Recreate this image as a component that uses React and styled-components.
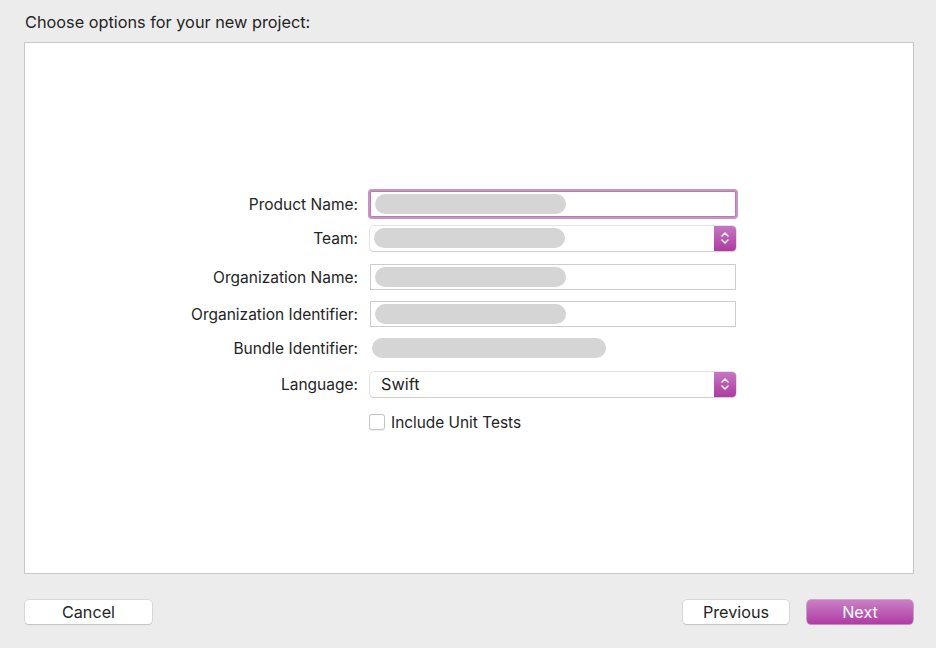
import React from "react";
import styled, { createGlobalStyle } from "styled-components";

const GlobalStyle = createGlobalStyle`
  html, body {
    margin: 0;
    padding: 0;
    background: #ececec;
    font-family: "Inter", "Liberation Sans", sans-serif;
    color: #242424;
  }
`;

const Window = styled.div`
  width: 936px;
  height: 648px;
  box-sizing: border-box;
  padding: 12px 22px 0 24px;
  display: flex;
  flex-direction: column;
`;

const Title = styled.div`
  font-size: 16.3px;
  height: 20px;
  line-height: 20px;
  padding-left: 1px;
  margin-bottom: 10px;
`;

const Panel = styled.div`
  height: 532px;
  box-sizing: border-box;
  background: #fff;
  border: 1px solid #c8c8c8;
  padding-top: 146px;
`;

const Form = styled.div`
  display: flex;
  flex-direction: column;
`;

const Row = styled.div`
  display: grid;
  grid-template-columns: 333px 366px;
  column-gap: 12px;
  align-items: center;
  height: ${(p) => p.h}px;
`;

const Label = styled.div`
  text-align: right;
  font-size: 15.5px;
`;

const TextField = styled.div`
  height: 26px;
  box-sizing: border-box;
  border: 1px solid ${(p) => (p.focused ? "#b87ab6" : "#cdcdcd")};
  box-shadow: ${(p) => (p.focused ? "0 0 0 2px #c894c6" : "none")};
  border-radius: ${(p) => (p.focused ? "2px" : "0")};
  background: #fff;
  display: flex;
  align-items: center;
  padding-left: 4px;
`;

const Popup = styled.div`
  height: 25px;
  box-sizing: border-box;
  border-radius: 4px;
  background: #fff;
  box-shadow: 0 0 0 0.5px #c9c9c9, 0 1px 1px rgba(0, 0, 0, 0.18);
  display: flex;
  align-items: center;
  position: relative;
  padding-left: 4px;
`;

const PopupText = styled.span`
  font-size: 16.3px;
  padding-left: 7px;
`;

const Stepper = styled.div`
  position: absolute;
  right: 0;
  top: 0;
  bottom: 0;
  width: 22px;
  border-radius: 0 4px 4px 0;
  background: linear-gradient(#c677c1, #ad3ba3);
  display: flex;
  align-items: center;
  justify-content: center;
`;

const Blob = styled.div`
  width: ${(p) => p.w}px;
  height: 20px;
  border-radius: 10px;
  background: #d5d5d5;
  margin-left: ${(p) => p.ml || 0}px;
`;

const CheckRow = styled.label`
  display: flex;
  align-items: center;
  gap: 6px;
  font-size: 15.4px;
  margin-left: -1px;
`;

const CheckBox = styled.span`
  width: 16px;
  height: 16px;
  box-sizing: border-box;
  border: 1px solid #c4c4c4;
  border-radius: 3px;
  background: #fff;
  box-shadow: 0 0.5px 1px rgba(0, 0, 0, 0.08);
`;

const Footer = styled.div`
  display: flex;
  justify-content: space-between;
  align-items: center;
  padding: 26px 1px 0 1px;
`;

const Group = styled.div`
  display: flex;
  gap: 18px;
`;

const Button = styled.button`
  width: ${(p) => p.w}px;
  height: 24px;
  border-radius: 4px;
  border: none;
  font-family: "Inter", "Liberation Sans", sans-serif;
  font-size: 16.2px;
  color: ${(p) => (p.primary ? "#fff" : "#242424")};
  background: ${(p) =>
    p.primary ? "linear-gradient(#ca80c5, #b03ca5)" : "#fff"};
  box-shadow: ${(p) =>
    p.primary
      ? "0 0 0 0.5px #b058a8, 0 1px 1px rgba(0,0,0,0.15)"
      : "0 0 0 0.5px #c4c4c4, 0 1px 1px rgba(0,0,0,0.18)"};
  padding: 0;
`;

const Chevrons = () => (
  <svg width="10" height="16" viewBox="0 0 10 16" fill="none">
    <path
      d="M2 6 L5 3 L8 6 M2 10 L5 13 L8 10"
      stroke="#fff"
      strokeWidth="1.5"
      strokeLinecap="round"
      strokeLinejoin="round"
    />
  </svg>
);

export default function App() {
  return (
    <>
      <GlobalStyle />
      <Window>
        <Title>Choose options for your new project:</Title>
        <Panel>
          <Form>
            <Row h={30}>
              <Label>Product Name:</Label>
              <TextField focused>
                <Blob w={191} />
              </TextField>
            </Row>
            <Row h={38}>
              <Label>Team:</Label>
              <Popup>
                <Blob w={191} />
                <Stepper>
                  <Chevrons />
                </Stepper>
              </Popup>
            </Row>
            <Row h={40}>
              <Label>Organization Name:</Label>
              <TextField>
                <Blob w={191} />
              </TextField>
            </Row>
            <Row h={34}>
              <Label>Organization Identifier:</Label>
              <TextField>
                <Blob w={191} />
              </TextField>
            </Row>
            <Row h={34}>
              <Label>Bundle Identifier:</Label>
              <Blob w={234} ml={2} />
            </Row>
            <Row h={38}>
              <Label>Language:</Label>
              <Popup>
                <PopupText>Swift</PopupText>
                <Stepper>
                  <Chevrons />
                </Stepper>
              </Popup>
            </Row>
            <Row h={38}>
              <span />
              <CheckRow>
                <CheckBox />
                Include Unit Tests
              </CheckRow>
            </Row>
          </Form>
        </Panel>
        <Footer>
          <Button w={127}>Cancel</Button>
          <Group>
            <Button w={106}>Previous</Button>
            <Button w={106} primary>
              Next
            </Button>
          </Group>
        </Footer>
      </Window>
    </>
  );
}
